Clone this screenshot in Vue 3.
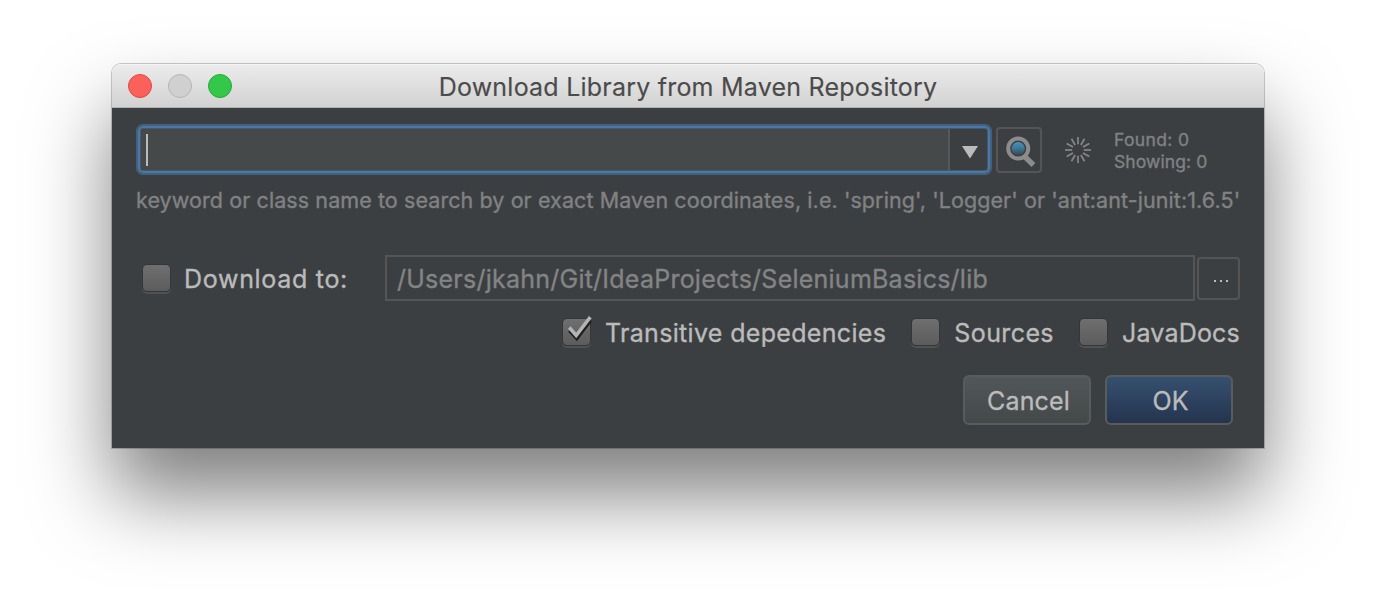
<script setup>
import { ref } from 'vue'

const options = ref([
  { id: 'transitive', label: 'Transitive depedencies', checked: true },
  { id: 'sources', label: 'Sources', checked: false },
  { id: 'javadocs', label: 'JavaDocs', checked: false },
])
const rays = Array.from({ length: 12 }, (_, i) => i * 30)
</script>

<template>
  <main class="desktop">
    <section class="window">
      <header class="titlebar">
        <div class="lights">
          <i class="light close"></i>
          <i class="light minimize"></i>
          <i class="light zoom"></i>
        </div>
        <h1 class="title"><span>Download Library from Maven Repository</span></h1>
      </header>

      <div class="body">
        <div class="search-row">
          <div class="combo">
            <div class="combo-input"><i class="caret"></i></div>
            <div class="combo-arrow">
              <svg width="16" height="13" viewBox="0 0 16 13"><path d="M0 0H16L8 12.5Z" fill="#bbbbbb" /></svg>
            </div>
          </div>
          <div class="search-button">
            <svg width="42" height="42" viewBox="0 0 42 42">
              <defs>
                <linearGradient id="lens" x1="0" y1="0" x2="0" y2="1">
                  <stop offset="0" stop-color="#4a93bd" />
                  <stop offset="0.45" stop-color="#3c7a9b" />
                  <stop offset="1" stop-color="#3c464c" />
                </linearGradient>
              </defs>
              <path d="M25.5 26.5L35.5 36" stroke="#8c8c8c" stroke-width="5.4" />
              <circle cx="20.2" cy="19.6" r="6.6" fill="url(#lens)" />
              <circle cx="20.2" cy="19.6" r="10" fill="none" stroke="#8c8c8c" stroke-width="4" />
            </svg>
          </div>
          <svg class="spinner" width="28" height="28" viewBox="-14 -14 28 28">
            <path v-for="a in rays" :key="a" d="M0 -5.8V-13" :transform="`rotate(${a})`" stroke="#868788" stroke-width="1.7" />
          </svg>
          <div class="status">
            <span>Found: 0</span>
            <span class="showing">Showing: 0</span>
          </div>
        </div>

        <p class="hint">keyword or class name to search by or exact Maven coordinates, i.e. 'spring', 'Logger' or 'ant:ant-junit:1.6.5'</p>

        <div class="path-row">
          <label class="check">
            <i class="box"></i>
            <span class="download-label">Download to:</span>
          </label>
          <div class="path"><span>/Users/jkahn/Git/IdeaProjects/SeleniumBasics/lib</span></div>
          <div class="browse"><i></i><i></i><i></i></div>
        </div>

        <div class="option-row">
          <label v-for="o in options" :key="o.id" class="check">
            <i class="box">
              <svg v-if="o.checked" width="30" height="30" viewBox="0 0 30 30">
                <path d="M6.5 14.5L13.8 22.5L27.5 4.5" fill="none" stroke="#1d1e1f" stroke-width="3.6" />
                <path d="M6.3 11.5L13.2 19.5L27.3 1.2" fill="none" stroke="#b4b4b4" stroke-width="3.6" />
              </svg>
            </i>
            <span :class="o.id">{{ o.label }}</span>
          </label>
        </div>

        <div class="button-row">
          <button class="btn cancel"><span>Cancel</span></button>
          <button class="btn ok"><span>OK</span></button>
        </div>
      </div>
    </section>
  </main>
</template>

<style>
body {
  margin: 0;
  background: #fff;
}
</style>

<style scoped>
* {
  box-sizing: border-box;
}
.desktop {
  width: 1376px;
  height: 608px;
  padding: 64px 112px;
  overflow: hidden;
  font-family: Inter, "Liberation Sans", sans-serif;
  font-size: 25px;
  color: #bbbbbb;
  white-space: nowrap;
  -webkit-text-stroke-width: 0.35px;
}
.window {
  width: 1152px;
  height: 384px;
  border-radius: 9px 9px 0 0;
  box-shadow: 0 0 0 1px rgba(0, 0, 0, 0.2), 0 47px 80px rgba(0, 0, 0, 0.5);
}
.titlebar {
  display: flex;
  align-items: center;
  height: 44px;
  padding: 0 16px;
  border-radius: 9px 9px 0 0;
  background: linear-gradient(#ebebeb, #d2d2d2);
  border-top: 1px solid #f6f6f6;
  border-bottom: 1px solid #b1b3b3;
}
.lights {
  display: flex;
  gap: 16px;
  width: 104px;
}
.light {
  width: 24px;
  height: 24px;
  border-radius: 50%;
  border: 1px solid;
}
.close { background: #fc605b; border-color: #df4744; }
.minimize { background: #d0d0d0; border-color: #b4b4b4; }
.zoom { background: #34c84a; border-color: #24a936; }
.title {
  flex: 1;
  margin: 2px 104px 0 0;
  font-size: 25px;
  font-weight: 400;
  line-height: 30px;
  letter-spacing: 0.22px;
  text-align: center;
  color: #4b4b4b;
  -webkit-text-stroke-width: 0.15px;
}
.body {
  height: 340px;
  padding: 16px 24px 0;
  background: #3c3f41;
}
.search-row {
  display: flex;
  align-items: center;
  height: 51px;
}
.combo {
  display: flex;
  width: 856px;
  height: 51px;
  border: 2px solid #42617f;
  border-radius: 7px;
  box-shadow: inset 0 0 0 2px #4c78a8, inset 0 0 0 3px #46596b;
  padding: 3px;
  background: #3c3f41;
}
.combo-input {
  flex: 1;
  padding: 5px 0 0 5px;
  background: #45494a;
  border-right: 2px solid #56595b;
}
.caret {
  display: block;
  width: 2px;
  height: 32px;
  background: #bbbbbb;
}
.combo-arrow {
  width: 37px;
  display: flex;
  align-items: center;
  justify-content: center;
  padding-top: 5px;
  padding-left: 3px;
}
.search-button {
  width: 46px;
  height: 46px;
  margin: 1px 0 0 4px;
  border: 2px solid #555555;
  border-radius: 4px;
}
.search-button svg,
.spinner {
  display: block;
}
.spinner {
  margin-left: 22px;
}
.status {
  display: flex;
  flex-direction: column;
  margin: 3px 0 0 22px;
  font-size: 17.5px;
  line-height: 22px;
  letter-spacing: 0.35px;
  color: #818283;
}
.showing {
  letter-spacing: 0.1px;
}
.hint {
  margin: 11px 0 0;
  font-size: 21.5px;
  line-height: 28px;
  letter-spacing: 0.085px;
  color: #818283;
}
.path-row {
  display: flex;
  align-items: center;
  height: 46px;
  margin-top: 41px;
}
.check {
  display: flex;
  align-items: center;
}
.box {
  position: relative;
  width: 29px;
  height: 28px;
  margin-right: 14px;
  border: 1px solid #353637;
  border-radius: 5px;
  background: linear-gradient(#6f6f6f, #5c5c5c);
  box-shadow: 0 2px 0 #4f5152;
}
.box svg {
  position: absolute;
  left: 0;
  top: -3px;
}
.path-row .check {
  width: 249px;
  padding-left: 6px;
}
.path-row .box {
  margin-right: 13px;
}
.download-label {
  padding-top: 2px;
  letter-spacing: 0.7px;
}
.option-row span {
  padding-top: 2px;
}
.transitive {
  letter-spacing: 0.33px;
}
.sources {
  letter-spacing: 0.4px;
}
.javadocs {
  letter-spacing: 0.2px;
}
.path {
  width: 810px;
  height: 46px;
  padding-left: 10px;
  border: 2px solid #555555;
  line-height: 45px;
  letter-spacing: 0.24px;
  color: #838485;
}
.browse {
  display: flex;
  justify-content: center;
  gap: 4px;
  width: 43px;
  height: 43px;
  margin-left: 2px;
  padding: 21px 0 0 5px;
  border: 2px solid #555555;
  border-radius: 4px;
}
.browse i {
  width: 2px;
  height: 2px;
  background: #bbbbbb;
}
.option-row {
  display: flex;
  justify-content: flex-end;
  gap: 25px;
  height: 30px;
  margin-top: 16px;
}
.button-row {
  display: flex;
  justify-content: flex-end;
  gap: 14px;
  margin: 28px 7px 0 0;
}
.btn {
  width: 128px;
  height: 50px;
  padding: 2px 0 0 3px;
  border: 2px solid #585c5d;
  border-radius: 6px;
  font: inherit;
  color: #bbbbbb;
  -webkit-text-stroke-width: 0.35px;
}
.cancel {
  background: linear-gradient(#525759, #434849);
  letter-spacing: 0.15px;
}
.ok { background: linear-gradient(#365070, #24344e); }
</style>
